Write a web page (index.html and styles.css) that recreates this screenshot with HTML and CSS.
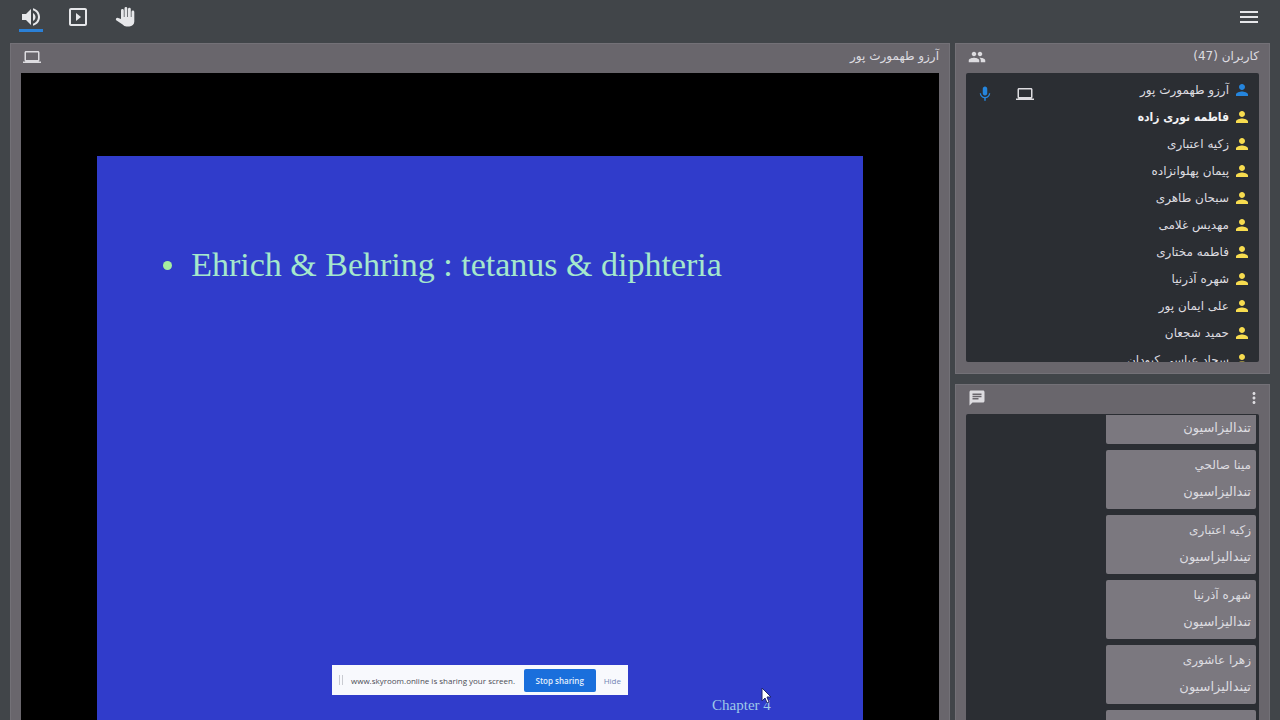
FILE: index.html
```html
<!DOCTYPE html>
<html lang="fa" dir="rtl">
<head>
    <meta charset="UTF-8">
    <meta name="viewport" content="width=device-width, initial-scale=1.0">
    <title>Skyroom</title>
    <link rel="stylesheet" href="styles.css">
</head>
<body>
    <!-- icons shared by the whole page -->
    <svg class="sprite" aria-hidden="true">
        <symbol id="volume" viewBox="0 0 24 24"><path d="M3 9v6h4l5 5V4L7 9H3zm13.500 3c0-1.770-1.020-3.290-2.500-4.030v8.050c1.480-.730 2.500-2.250 2.500-4.020zM14 3.230v2.060c2.890.860 5 3.540 5 6.710s-2.110 5.850-5 6.710v2.060c4.010-.910 7-4.490 7-8.770s-2.990-7.860-7-8.770z"/></symbol>
        <symbol id="play" viewBox="0 0 24 24"><path d="M10 8v8l5-4-5-4zm9-5H5c-1.100 0-2 .9-2 2v14c0 1.100.9 2 2 2h14c1.100 0 2-.9 2-2V5c0-1.100-.9-2-2-2zm0 16H5V5h14v14z"/></symbol>
        <symbol id="hand" viewBox="0 0 20 20"><path d="M6 12V3.500a1.400 1.400 0 0 1 2.800 0V10h.7V1.400a1.400 1.400 0 0 1 2.800 0V10h.7V2.200a1.400 1.400 0 0 1 2.800 0V10h.7V5a1.400 1.400 0 0 1 2.800 0v9.500a5 5 0 0 1-5 5h-2.800a5 5 0 0 1-3.900-1.900L1.200 13.200a1.500 1.500 0 0 1 2-2.200z"/></symbol>
        <symbol id="menu" viewBox="0 0 24 24"><path d="M3 18h18v-2H3v2zm0-5h18v-2H3v2zm0-7v2h18V6H3z"/></symbol>
        <symbol id="laptop" viewBox="0 0 24 24"><path d="M20 18c1.100 0 2-.9 2-2V6c0-1.100-.9-2-2-2H4c-1.100 0-2 .9-2 2v10c0 1.100.9 2 2 2H0v2h24v-2h-4zM4 6h16v10H4V6z"/></symbol>
        <symbol id="people" viewBox="0 0 24 24"><path d="M16 11c1.660 0 2.990-1.340 2.990-3S17.660 5 16 5s-3 1.340-3 3 1.340 3 3 3zm-8 0c1.660 0 2.990-1.340 2.990-3S9.660 5 8 5 5 6.340 5 8s1.340 3 3 3zm0 2c-2.330 0-7 1.170-7 3.500V19h14v-2.500c0-2.330-4.670-3.500-7-3.500zm8 0c-.290 0-.620.020-.970.050 1.160.840 1.970 1.970 1.970 3.450V19h6v-2.500c0-2.330-4.670-3.500-7-3.500z"/></symbol>
        <symbol id="person" viewBox="0 0 24 24"><path d="M12 12c2.210 0 4-1.790 4-4s-1.790-4-4-4-4 1.790-4 4 1.790 4 4 4zm0 2c-2.670 0-8 1.340-8 4v2h16v-2c0-2.660-5.330-4-8-4z"/></symbol>
        <symbol id="mic" viewBox="0 0 24 24"><path d="M12 14c1.660 0 2.990-1.340 2.990-3L15 5c0-1.660-1.340-3-3-3S9 3.340 9 5v6c0 1.660 1.340 3 3 3zm5.300-3c0 3-2.540 5.100-5.300 5.100S6.700 14 6.700 11H5c0 3.410 2.720 6.230 6 6.720V21h2v-3.280c3.280-.480 6-3.300 6-6.720h-1.700z"/></symbol>
        <symbol id="chat" viewBox="0 0 24 24"><path d="M20 2H4c-1.100 0-1.990.9-1.990 2L2 22l4-4h14c1.100 0 2-.9 2-2V4c0-1.100-.9-2-2-2zM6 9h12v2H6V9zm8 5H6v-2h8v2zm4-6H6V6h12v2z"/></symbol>
        <symbol id="more" viewBox="0 0 24 24"><path d="M12 8c1.100 0 2-.9 2-2s-.9-2-2-2-2 .9-2 2 .9 2 2 2zm0 2c-1.100 0-2 .9-2 2s.9 2 2 2 2-.9 2-2-.9-2-2-2zm0 6c-1.100 0-2 .9-2 2s.9 2 2 2 2-.9 2-2-.9-2-2-2z"/></symbol>
    </svg>

    <header class="toolbar">
        <button type="button" class="tool" aria-label="منو"><svg class="icon-lg"><use href="#menu"/></svg></button>
        <div class="tools" dir="ltr">
            <button type="button" class="tool active" aria-label="صدا"><svg class="icon-lg"><use href="#volume"/></svg></button>
            <button type="button" class="tool" aria-label="پخش"><svg class="icon-lg"><use href="#play"/></svg></button>
            <button type="button" class="tool" aria-label="اجازه"><svg class="icon-md"><use href="#hand"/></svg></button>
        </div>
    </header>

    <main class="room">
        <aside class="side">
            <section class="panel">
                <div class="panel-head">
                    <h2>کاربران (47)</h2>
                    <svg class="icon"><use href="#people"/></svg>
                </div>
                <ul class="users">
                    <li class="presenter">
                        <svg class="icon"><use href="#person"/></svg><span>آرزو طهمورث پور</span>
                        <div class="status">
                            <svg class="icon"><use href="#laptop"/></svg>
                            <svg class="icon mic"><use href="#mic"/></svg>
                        </div>
                    </li>
                    <li class="me"><svg class="icon"><use href="#person"/></svg><span>فاطمه نوری زاده</span></li>
                    <li><svg class="icon"><use href="#person"/></svg><span>زکیه اعتباری</span></li>
                    <li><svg class="icon"><use href="#person"/></svg><span>پیمان پهلوانزاده</span></li>
                    <li><svg class="icon"><use href="#person"/></svg><span>سبحان طاهری</span></li>
                    <li><svg class="icon"><use href="#person"/></svg><span>مهدیس غلامی</span></li>
                    <li><svg class="icon"><use href="#person"/></svg><span>فاطمه مختاری</span></li>
                    <li><svg class="icon"><use href="#person"/></svg><span>شهره آذرنیا</span></li>
                    <li><svg class="icon"><use href="#person"/></svg><span>علی ایمان پور</span></li>
                    <li><svg class="icon"><use href="#person"/></svg><span>حمید شجعان</span></li>
                    <li><svg class="icon"><use href="#person"/></svg><span>سجاد عباسی کبودان</span></li>
                </ul>
            </section>

            <section class="panel chat">
                <div class="panel-head">
                    <button type="button" class="more" aria-label="گزینه‌ها"><svg class="icon"><use href="#more"/></svg></button>
                    <svg class="icon"><use href="#chat"/></svg>
                </div>
                <div class="messages">
                    <div class="message continued"><p class="text">تندالیزاسیون</p></div>
                    <div class="message"><p>مینا صالحي</p><p class="text">تندالیزاسیون</p></div>
                    <div class="message"><p>زکیه اعتباری</p><p class="text">تیندالیزاسیون</p></div>
                    <div class="message"><p>شهره آذرنیا</p><p class="text">تندالیزاسیون</p></div>
                    <div class="message"><p>زهرا عاشوری</p><p class="text">تیندالیزاسیون</p></div>
                    <div class="message"><p></p><p></p></div>
                </div>
            </section>
        </aside>

        <section class="panel share">
            <div class="panel-head">
                <h2>آرزو طهمورث پور</h2>
                <svg class="icon"><use href="#laptop"/></svg>
            </div>
            <div class="screen" dir="ltr">
                <div class="slide">
                    <ul class="points">
                        <li>Ehrich &amp; Behring : tetanus &amp; diphteria</li>
                    </ul>
                    <div class="chapter">Chapter 4
                        <svg class="cursor" viewBox="0 0 12 18"><path d="M1 1v13l3-3 2 5 2-1-2-5h4z"/></svg>
                    </div>
                </div>
                <div class="share-bar">
                    <span class="grip"></span>
                    <span class="share-text">www.skyroom.online is sharing your screen.</span>
                    <button type="button" class="stop">Stop sharing</button>
                    <a href="#" class="hide">Hide</a>
                </div>
            </div>
        </section>
    </main>
</body>
</html>
```
FILE: styles.css
```css
* {
    box-sizing: border-box;
}

body {
    margin: 0;
    height: 100vh;
    display: flex;
    flex-direction: column;
    overflow: hidden;
    background: #414549;
    color: #dddce0;
    font-family: "DejaVu Sans", sans-serif;
    font-size: 12px;
}

h2, p, ul {
    margin: 0;
    padding: 0;
}

ul {
    list-style: none;
}

button {
    padding: 0;
    border: none;
    background: none;
    color: inherit;
    font: inherit;
    cursor: pointer;
}

svg {
    display: block;
    flex: none;
    fill: currentColor;
}

.sprite {
    position: absolute;
    width: 0;
    height: 0;
}

.icon {
    width: 18px;
    height: 18px;
}

.icon-md {
    width: 20px;
    height: 20px;
}

.icon-lg {
    width: 24px;
    height: 24px;
}

/* top bar */
.toolbar {
    flex: none;
    display: flex;
    justify-content: space-between;
    height: 43px;
    padding: 5px 19px 0;
    color: #e6e7ea;
}

.tools {
    display: flex;
    gap: 23px;
}

.tool {
    display: flex;
    align-items: center;
    justify-content: center;
    width: 24px;
    height: 27px;
    border-bottom: 3px solid transparent;
}

.tool.active {
    border-bottom-color: #2b80d6;
}

/* panels */
.room {
    flex: 1;
    min-height: 0;
    display: grid;
    grid-template-columns: 315px minmax(0, 1fr);
    gap: 5px;
    padding: 0 10px;
}

.side {
    min-height: 0;
    display: flex;
    flex-direction: column;
    gap: 10px;
}

.panel {
    padding: 0 10px 11px;
    border: 1px solid #737177;
    background: #69666c;
}

.panel-head {
    display: flex;
    align-items: center;
    justify-content: space-between;
    height: 29px;
    padding: 0 0 3px 2px;
}

.panel-head h2 {
    font-size: 12px;
    font-weight: normal;
    line-height: 22px;
    padding-bottom: 3px;
}

.more {
    margin-right: -4px;
}

.chat,
.share {
    min-height: 0;
    display: flex;
    flex-direction: column;
    padding-bottom: 0;
    border-bottom: none;
}

.chat {
    flex: 1;
}

/* users */
.users {
    height: 289px;
    padding: 3px 8px 0 10px;
    overflow: hidden;
    border-radius: 2px;
    background: #2b2e33;
}

.users li {
    display: flex;
    align-items: center;
    gap: 4px;
    height: 27px;
}

.users li > .icon {
    color: #f7dc4f;
}

.users .presenter > .icon,
.mic {
    color: #2585dd;
}

.users .me {
    color: #f2f2f4;
    font-family: "DejaVu Sans Condensed", "DejaVu Sans", sans-serif;
    font-weight: bold;
}

.status {
    display: flex;
    gap: 22px;
    margin-right: auto;
    padding-top: 8px;
}

/* chat */
.messages {
    flex: 1;
    min-height: 0;
    display: flex;
    flex-direction: column;
    gap: 6px;
    padding: 1px 3px 0;
    overflow: hidden;
    border-radius: 2px 2px 0 0;
    background: #2b2e33;
}

.message {
    flex: none;
    width: 150px;
    padding: 2px 5px 3px;
    border-radius: 2px;
    background: #7b787f;
}

.message.continued {
    padding: 0 5px 2px;
    border-radius: 0 0 2px 2px;
}

.message p {
    height: 27px;
    line-height: 26px;
}

.message .text {
    font-size: 13px;
}

/* shared screen */
.screen {
    flex: 1;
    min-height: 0;
    position: relative;
    display: flex;
    justify-content: center;
    padding-top: 83px;
    background: #000;
}

.slide {
    width: 83.4%;
    display: flex;
    flex-direction: column;
    justify-content: space-between;
    padding: 88px 92px 5px 66px;
    background: #303ccb;
    color: #a5e8cc;
    font-family: "Liberation Serif", serif;
}

.points li {
    display: flex;
    align-items: center;
    gap: 19px;
    font-size: 34px;
    line-height: 42px;
    white-space: nowrap;
}

.points li::before {
    content: "";
    width: 9px;
    height: 9px;
    border-radius: 50%;
    background: #a6ee9f;
}

.chapter {
    position: relative;
    align-self: flex-end;
    color: #9fc9e8;
    font-size: 15px;
    line-height: 20px;
}

.cursor {
    position: absolute;
    right: -2px;
    top: -8px;
    width: 12px;
    height: 18px;
    fill: #fff;
    stroke: #22276f;
}

.share-bar {
    position: absolute;
    bottom: 25px;
    left: 50%;
    transform: translateX(-50%);
    display: flex;
    align-items: center;
    width: 296px;
    height: 30px;
    padding: 0 7px;
    background: #f8f9fd;
    color: #4b4d55;
    font-family: "Open Sans", sans-serif;
    font-size: 8px;
    white-space: nowrap;
}

.grip {
    width: 4px;
    height: 10px;
    margin-right: 8px;
    border: solid #c9cbd1;
    border-width: 0 1px;
}

.stop {
    flex: none;
    width: 72px;
    height: 23px;
    margin: 0 8px 0 auto;
    border-radius: 2px;
    background: #1a6fdc;
    color: #e4effc;
    font-weight: 600;
}

.hide {
    color: #7186b4;
    text-decoration: none;
}
```
